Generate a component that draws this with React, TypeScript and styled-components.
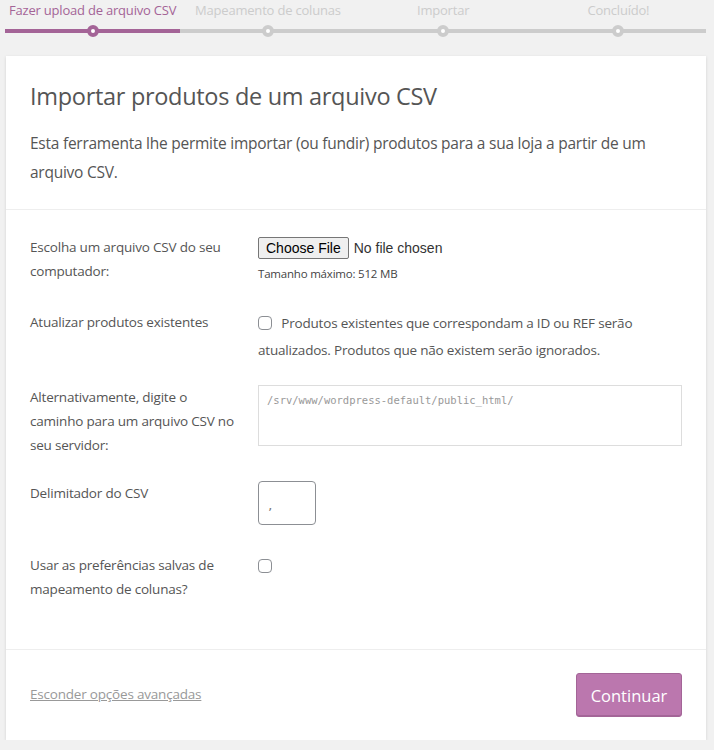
import styled, { createGlobalStyle } from "styled-components";

const Global = createGlobalStyle`
  body {
    margin: 0;
    background: #f1f1f1;
    font-family: "Open Sans", "Liberation Sans", sans-serif;
    color: #555;
  }
`;

const Page = styled.div`
  padding: 0 8px 0 6px;
`;

const Steps = styled.ol`
  list-style: none;
  margin: 0;
  padding: 0;
  display: grid;
  grid-template-columns: repeat(4, 1fr);
  margin-left: -1px;
`;

const Step = styled.li<{ $active?: boolean }>`
  position: relative;
  text-align: center;
  font-size: 13px;
  line-height: 20px;
  height: 33px;
  color: ${(p) => (p.$active ? "#a46497" : "#ccc")};
  letter-spacing: -0.2px;
  border-bottom: 4px solid ${(p) => (p.$active ? "#a46497" : "#ccc")};
  box-sizing: border-box;
  margin-bottom: 23px;
  &::after {
    content: "";
    position: absolute;
    left: 50%;
    bottom: -8px;
    width: 4px;
    height: 4px;
    margin-left: -6px;
    border: 4px solid ${(p) => (p.$active ? "#a46497" : "#ccc")};
    background: #fff;
    border-radius: 50%;
  }
`;

const Card = styled.div`
  background: #fff;
  box-shadow: 0 1px 3px rgba(0, 0, 0, 0.13);
`;

const Header = styled.header`
  padding: 24px 24px 22px;
  border-bottom: 1px solid #eee;
`;

const Title = styled.h2`
  margin: 0 0 17px;
  font-size: 23.5px;
  font-weight: 400;
  line-height: 32px;
  color: #555;
  letter-spacing: -0.3px;
`;

const Intro = styled.p`
  margin: 0;
  font-size: 15.5px;
  line-height: 29px;
  color: #555;
  letter-spacing: -0.25px;
`;

const Form = styled.section`
  padding: 25px 24px 24px;
  border-bottom: 1px solid #eee;
`;

const Row = styled.div<{ $gap?: number }>`
  display: grid;
  grid-template-columns: 228px 1fr;
  padding-bottom: ${(p) => p.$gap ?? 24}px;
`;

const Label = styled.label`
  font-size: 13.5px;
  line-height: 24px;
  padding-right: 20px;
  letter-spacing: -0.2px;
`;

const Field = styled.div`
  font-size: 13.5px;
  letter-spacing: -0.2px;
`;

const FileInput = styled.input`
  font-family: "Liberation Sans", Arial, sans-serif;
  font-size: 14px;
  color: #333;
  margin-top: 2px;
  &::file-selector-button {
    font-family: "Liberation Sans", Arial, sans-serif;
    font-size: 14px;
    height: 22px;
    padding: 0 7px;
    margin-right: 5px;
    border: 1px solid #767676;
    border-radius: 2px;
    background: #efefef;
    color: #000;
  }
`;

const Hint = styled.small`
  display: block;
  font-size: 11.5px;
  line-height: 16px;
  margin-top: 7px;
  color: #444;
`;

const CheckLine = styled.label`
  display: block;
  font-size: 13.5px;
  line-height: 27px;
`;

const Box = styled.input<{ $top?: number }>`
  appearance: none;
  width: 14px;
  height: 14px;
  margin: ${(p) => p.$top ?? 0}px 6px 0 0;
  border: 1px solid #8c8f94;
  border-radius: 4px;
  background: #fff;
  vertical-align: -2px;
`;

const PathArea = styled.textarea`
  display: block;
  box-sizing: border-box;
  width: 100%;
  height: 61px;
  padding: 6px 8px;
  border: 1px solid #ddd;
  resize: none;
  font-family: "DejaVu Sans Mono", "Liberation Mono", monospace;
  font-size: 10.5px;
  line-height: 16px;
  &::placeholder {
    color: #999;
  }
`;

const Delim = styled.input`
  box-sizing: border-box;
  width: 58px;
  height: 44px;
  padding: 6px 8px 0;
  border: 1px solid #8c8f94;
  border-radius: 4px;
  font-family: "DejaVu Sans Mono", monospace;
  font-size: 11px;
  color: #777;
`;

const Footer = styled.footer`
  display: flex;
  align-items: center;
  justify-content: space-between;
  padding: 23px 24px;
`;

const Toggle = styled.a`
  font-size: 13.5px;
  color: #999;
  text-decoration: underline;
  letter-spacing: -0.2px;
  margin-top: -3px;
`;

const Continue = styled.button`
  width: 106px;
  height: 44px;
  border: 1px solid #a36597;
  border-radius: 3px;
  background: #bb77ae;
  color: #fff;
  font-family: "Open Sans", sans-serif;
  font-size: 16.5px;
  box-shadow: inset 0 -1px 0 #a36597;
`;

const steps = ["Fazer upload de arquivo CSV", "Mapeamento de colunas", "Importar", "Concluído!"];

export default function App() {
  return (
    <Page>
      <Global />
      <Steps>
        {steps.map((s, i) => (
          <Step key={s} $active={i === 0}>
            {s}
          </Step>
        ))}
      </Steps>
      <Card>
        <Header>
          <Title>Importar produtos de um arquivo CSV</Title>
          <Intro>
            Esta ferramenta lhe permite importar (ou fundir) produtos para a sua loja a partir de um
            arquivo CSV.
          </Intro>
        </Header>
        <Form>
          <Row $gap={27}>
            <Label>Escolha um arquivo CSV do seu computador:</Label>
            <Field>
              <FileInput type="file" />
              <Hint>Tamanho máximo: 512 MB</Hint>
            </Field>
          </Row>
          <Row $gap={21}>
            <Label>Atualizar produtos existentes</Label>
            <Field>
              <CheckLine>
                <Box type="checkbox" /> Produtos existentes que correspondam a ID ou REF serão
                atualizados. Produtos que não existem serão ignorados.
              </CheckLine>
            </Field>
          </Row>
          <Row>
            <Label>Alternativamente, digite o caminho para um arquivo CSV no seu servidor:</Label>
            <Field>
              <PathArea placeholder="/srv/www/wordpress-default/public_html/" />
            </Field>
          </Row>
          <Row $gap={28}>
            <Label>Delimitador do CSV</Label>
            <Field>
              <Delim defaultValue="," />
            </Field>
          </Row>
          <Row>
            <Label>Usar as preferências salvas de mapeamento de colunas?</Label>
            <Field>
              <Box type="checkbox" $top={6} />
            </Field>
          </Row>
        </Form>
        <Footer>
          <Toggle href="#">Esconder opções avançadas</Toggle>
          <Continue>Continuar</Continue>
        </Footer>
      </Card>
    </Page>
  );
}
